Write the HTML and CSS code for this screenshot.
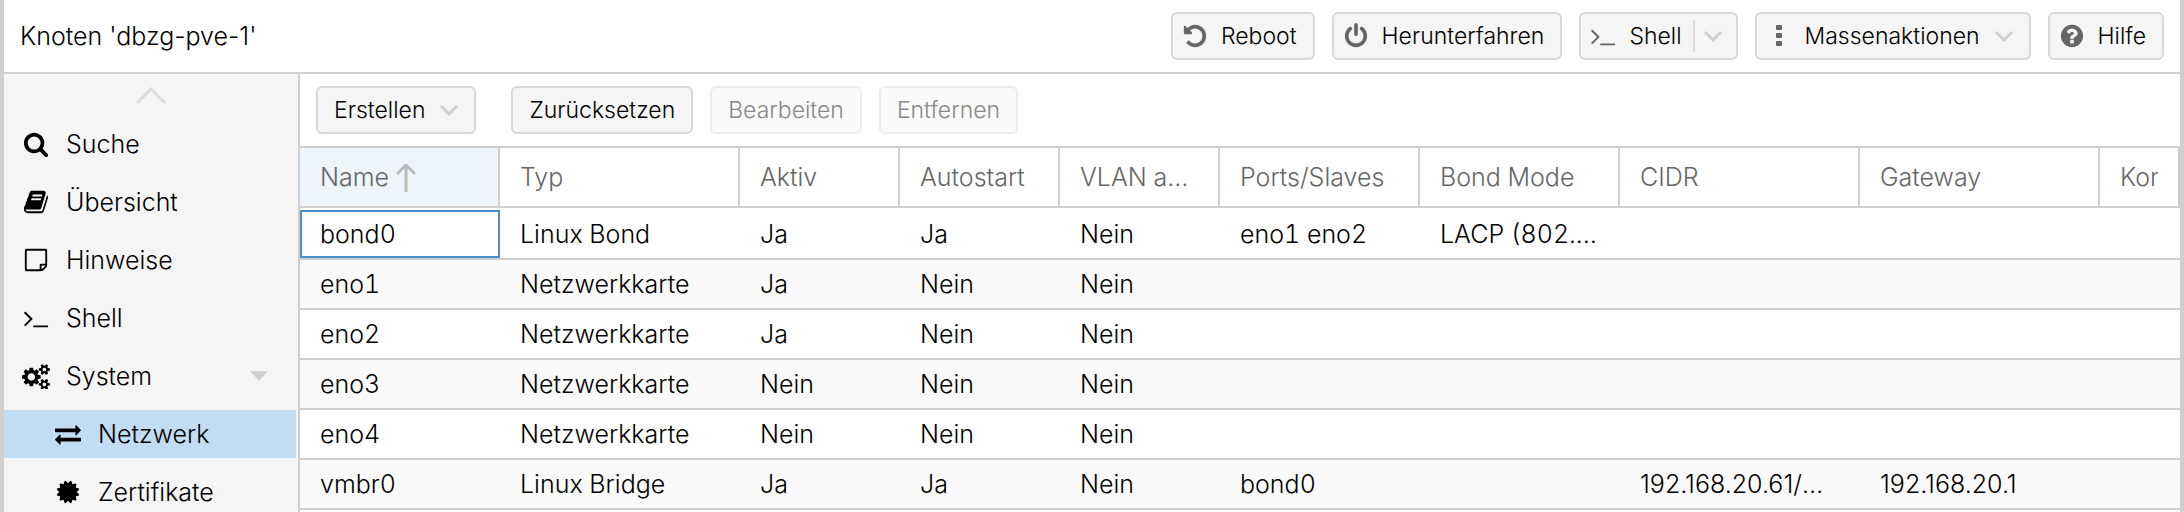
FILE: index.html
```html
<!DOCTYPE html>
<html lang="de">
<head>
  <meta charset="utf-8">
  <title>dbzg-pve-1 - Netzwerk</title>
  <link rel="stylesheet" href="styles.css">
</head>
<body>

<div class="panel">
  <header class="panel-header">
    <h1>Knoten 'dbzg-pve-1'</h1>
    <div class="actions">
      <button type="button" class="btn">
        <svg class="icon" viewBox="0 0 1792 1792"><path d="M1664 896q0 156-61 298t-164 245-245 164-298 61q-172 0-327-72.5t-264-204.5q-7-10-6.5-22.5t8.5-20.5l137-138q10-9 25-9 16 2 23 12 73 95 179 147t225 52q104 0 198.5-40.5t163.5-109.5 109.5-163.5 40.5-198.5-40.5-198.5-109.5-163.5-163.5-109.5-198.5-40.5q-98 0-188 35.5t-160 101.5l137 138q31 30 14 69-17 40-59 40h-448q-26 0-45-19t-19-45v-448q0-42 40-59 39-17 69 14l130 129q107-101 244.5-156.5t284.5-55.5q156 0 298 61t245 164 164 245 61 298z"/></svg>
        Reboot
      </button>
      <button type="button" class="btn">
        <svg class="icon" viewBox="0 0 1792 1792"><path d="M1664 896q0 156-61 298t-164 245-245 164-298 61-298-61-245-164-164-245-61-298q0-182 80.5-343t226.5-270q43-32 95.5-25t83.5 50q32 42 24.5 94.5t-49.5 84.5q-98 74-151.5 181t-53.5 228q0 104 40.5 198.5t109.5 163.5 163.5 109.5 198.5 40.5 198.5-40.5 163.5-109.5 109.5-163.5 40.5-198.5q0-121-53.5-228t-151.5-181q-42-32-49.5-84.5t24.5-94.5q31-43 84-50t95 25q146 109 226.5 270t80.5 343zm-640-768v640q0 52-38 90t-90 38-90-38-38-90v-640q0-52 38-90t90-38 90 38 38 90z"/></svg>
        Herunterfahren
      </button>
      <button type="button" class="btn btn-split">
        <svg class="icon" viewBox="0 0 1792 1792"><path d="M649 983l-466 466q-10 10-23 10t-23-10l-50-50q-10-10-10-23t10-23l393-393-393-393q-10-10-10-23t10-23l50-50q10-10 23-10t23 10l466 466q10 10 10 23t-10 23zm1079 457v64q0 14-9 23t-23 9h-960q-14 0-23-9t-9-23v-64q0-14 9-23t23-9h960q14 0 23 9t9 23z"/></svg>
        Shell
        <span class="divider"></span>
        <svg class="chevron" viewBox="0 0 18 12"><path d="M1 2l8 8 8-8"/></svg>
      </button>
      <button type="button" class="btn">
        <svg class="icon" viewBox="0 0 26 26"><path d="M11 2h4q1 0 1 1v3q0 1-1 1h-4q-1 0-1-1v-3q0-1 1-1zM11 10h4q1 0 1 1v3q0 1-1 1h-4q-1 0-1-1v-3q0-1 1-1zM11 18h4q1 0 1 1v3q0 1-1 1h-4q-1 0-1-1v-3q0-1 1-1z"/></svg>
        Massenaktionen
        <svg class="chevron" viewBox="0 0 18 12"><path d="M1 2l8 8 8-8"/></svg>
      </button>
      <button type="button" class="btn">
        <svg class="icon" viewBox="0 0 1792 1792"><path d="M1024 1376v-192q0-14-9-23t-23-9h-192q-14 0-23 9t-9 23v192q0 14 9 23t23 9h192q14 0 23-9t9-23zm256-672q0-88-55.5-163t-138.5-116-170-41q-243 0-371 213-15 24 8 42l132 100q7 6 19 6 16 0 25-12 53-68 86-92 34-24 86-24 48 0 85.5 26t37.5 59q0 38-20 61t-68 45q-63 28-115.5 86.5t-52.5 125.5v36q0 14 9 23t23 9h192q14 0 23-9t9-23q0-19 21.5-49.5t54.5-49.5q32-18 49-28.5t46-35 44.5-48 28-60.5 12.5-81zm384 192q0 209-103 385.5t-279.5 279.5-385.5 103-385.5-103-279.5-279.5-103-385.5 103-385.5 279.5-279.5 385.5-103 385.5 103 279.5 279.5 103 385.5z"/></svg>
        Hilfe
      </button>
    </div>
  </header>

  <div class="panel-body">
    <nav class="sidebar">
      <button type="button" class="scroller" aria-label="Nach oben">
        <svg viewBox="0 0 30 18"><path d="M1 16L15 2l14 14"/></svg>
      </button>
      <a href="#suche">
        <svg class="icon" viewBox="0 0 1792 1792"><path d="M1216 832q0-185-131.5-316.5t-316.5-131.5-316.5 131.5-131.5 316.5 131.5 316.5 316.5 131.5 316.5-131.5 131.5-316.5zm512 832q0 52-38 90t-90 38q-54 0-90-38l-343-342q-179 124-399 124-143 0-273.5-55.5t-225-150-150-225-55.5-273.5 55.5-273.5 150-225 225-150 273.5-55.5 273.5 55.5 225 150 150 225 55.5 273.5q0 220-124 399l343 343q37 37 37 90z"/></svg>
        Suche
      </a>
      <a href="#uebersicht">
        <svg class="icon" viewBox="0 0 1792 1792"><path d="M1703 478q40 57 18 129l-275 906q-19 64-76.5 107.5t-122.5 43.5h-923q-77 0-148.5-53.5t-99.5-131.5q-24-67-2-127 0-4 3-27t4-37q1-8-3-21.5t-3-19.5q2-11 8-21t16.5-23.5 16.5-23.5q23-38 45-91.5t30-91.5q3-10 .5-30t-.5-28q3-11 17-28t17-23q21-36 42-92t25-90q1-9-2.5-32t.5-28q4-13 22-30.5t22-22.5q19-26 42.5-84.5t27.5-96.5q1-8-3-25.5t-2-26.5q2-8 9-18t18-23 17-21q8-12 16.5-30.5t15-35 16-36 19.5-32 26.5-23.5 36-11.5 47.5 5.5l-1 3q38-9 51-9h761q74 0 114 56t18 130l-274 906q-36 119-71.5 153.5t-128.5 34.5h-869q-27 0-38 15-11 16-1 43 24 70 144 70h923q29 0 56-15.5t35-41.5l300-987q7-22 5-57 38 15 59 43zm-1064 2q-4 13 2 22.5t20 9.5h608q13 0 25.5-9.5t16.5-22.5l21-64q4-13-2-22.5t-20-9.5h-608q-13 0-25.5 9.5t-16.5 22.5zm-83 256q-4 13 2 22.5t20 9.5h608q13 0 25.5-9.5t16.5-22.5l21-64q4-13-2-22.5t-20-9.5h-608q-13 0-25.5 9.5t-16.5 22.5z"/></svg>
        Übersicht
      </a>
      <a href="#hinweise">
        <svg class="icon" viewBox="0 0 1792 1792"><path d="M1528 1280h-248v248q29-10 41-22l185-185q12-12 22-41zm-280-128h288v-896h-1280v1280h896v-288q0-40 28-68t68-28zm416-928v1024q0 40-20 88t-48 76l-184 184q-28 28-76 48t-88 20h-1024q-40 0-68-28t-28-68v-1344q0-40 28-68t68-28h1344q40 0 68 28t28 68z"/></svg>
        Hinweise
      </a>
      <a href="#shell">
        <svg class="icon" viewBox="0 0 1792 1792"><path d="M649 983l-466 466q-10 10-23 10t-23-10l-50-50q-10-10-10-23t10-23l393-393-393-393q-10-10-10-23t10-23l50-50q10-10 23-10t23 10l466 466q10 10 10 23t-10 23zm1079 457v64q0 14-9 23t-23 9h-960q-14 0-23-9t-9-23v-64q0-14 9-23t23-9h960q14 0 23 9t9 23z"/></svg>
        Shell
      </a>
      <a href="#system">
        <svg class="icon icon-wide" viewBox="0 0 1920 1792"><path d="M896 960q0-106-75-181t-181-75-181 75-75 181 75 181 181 75 181-75 75-181zm768 512q0-52-38-90t-90-38-90 38-38 90q0 53 37.5 90.5t90.5 37.5 90.5-37.5 37.5-90.5zm0-1024q0-52-38-90t-90-38-90 38-38 90q0 53 37.5 90.5t90.5 37.5 90.5-37.5 37.5-90.5zm-384 421v185q0 10-7 19.5t-16 10.5l-155 24q-11 35-32 76 34 48 90 115 7 11 7 20 0 12-7 19-23 30-82.5 89.5t-78.5 59.5q-11 0-21-7l-115-90q-37 19-77 31-11 108-23 155-7 24-30 24h-186q-11 0-20-7.5t-10-17.5l-23-153q-34-10-75-31l-118 89q-7 7-20 7-11 0-21-8-144-133-144-160 0-9 7-19 10-14 41-53t47-61q-23-44-35-82l-152-24q-10-1-17-9.5t-7-19.5v-185q0-10 7-19.5t16-10.5l155-24q11-35 32-76-34-48-90-115-7-11-7-20 0-12 7-20 22-30 82-89t79-59q11 0 21 7l115 90q34-18 77-32 11-108 23-154 7-24 30-24h186q11 0 20 7.5t10 17.5l23 153q34 10 75 31l118-89q8-7 20-7 11 0 21 8 144 133 144 160 0 8-7 19-12 16-42 54t-45 60q23 48 34 82l152 23q10 2 17 10.5t7 19.5zm640 533v140q0 16-149 31-12 27-30 52 51 113 51 138 0 4-4 7-122 71-124 71-8 0-46-47t-52-68q-20 2-30 2t-30-2q-14 21-52 68t-46 47q-2 0-124-71-4-3-4-7 0-25 51-138-18-25-30-52-149-15-149-31v-140q0-16 149-31 13-29 30-52-51-113-51-138 0-4 4-7 4-2 35-20t59-34 30-16q8 0 46 46.5t52 67.5q20-2 30-2t30 2q51-71 92-112l6-2q4 0 124 70 4 3 4 7 0 25-51 138 17 23 30 52 149 15 149 31zm0-1024v140q0 16-149 31-12 27-30 52 51 113 51 138 0 4-4 7-122 71-124 71-8 0-46-47t-52-68q-20 2-30 2t-30-2q-14 21-52 68t-46 47q-2 0-124-71-4-3-4-7 0-25 51-138-18-25-30-52-149-15-149-31v-140q0-16 149-31 13-29 30-52-51-113-51-138 0-4 4-7 4-2 35-20t59-34 30-16q8 0 46 46.5t52 67.5q20-2 30-2t30 2q51-71 92-112l6-2q4 0 124 70 4 3 4 7 0 25-51 138 17 23 30 52 149 15 149 31z"/></svg>
        System
        <span class="expander"></span>
      </a>
      <a href="#netzwerk" class="sub active">
        <svg class="icon" viewBox="0 0 1792 1792"><path d="M1792 1184v192q0 13-9.5 22.5t-22.5 9.5h-1376v192q0 13-9.5 22.5t-22.5 9.5q-12 0-24-10l-319-320q-9-9-9-22 0-14 9-23l320-320q9-9 23-9 13 0 22.5 9.5t9.5 22.5v192h1376q13 0 22.5 9.5t9.5 22.5zm0-544q0 14-9 23l-320 320q-9 9-23 9-13 0-22.5-9.5t-9.5-22.5v-192h-1376q-13 0-22.5-9.5t-9.5-22.5v-192q0-13 9.5-22.5t22.5-9.5h1376v-192q0-14 9-23t23-9q12 0 24 10l319 319q9 9 9 23z"/></svg>
        Netzwerk
      </a>
      <a href="#zertifikate" class="sub">
        <svg class="icon" viewBox="0 0 1792 1792"><path d="M1504 896l138 135q30 28 20 70-12 41-52 51l-188 48 53 186q12 41-19 70-29 31-70 19l-186-53-48 188q-10 40-51 52-12 2-19 2-31 0-51-22l-135-138-135 138q-28 30-70 20-41-11-51-52l-48-188-186 53q-41 12-70-19-31-29-19-70l53-186-188-48q-40-10-52-51-10-42 20-70l138-135-138-135q-30-28-20-70 12-41 52-51l188-48-53-186q-12-41 19-70 29-31 70-19l186 53 48-188q10-41 51-51 41-12 70 19l135 139 135-139q29-30 70-19 41 10 51 51l48 188 186-53q41-12 70 19 31 29 19 70l-53 186 188 48q40 10 52 51 10 42-20 70z"/></svg>
        Zertifikate
      </a>
    </nav>

    <main class="content">
      <div class="toolbar">
        <button type="button" class="btn btn-create">
          Erstellen
          <svg class="chevron" viewBox="0 0 18 12"><path d="M1 2l8 8 8-8"/></svg>
        </button>
        <button type="button" class="btn">Zurücksetzen</button>
        <button type="button" class="btn" disabled>Bearbeiten</button>
        <button type="button" class="btn" disabled>Entfernen</button>
      </div>

      <table class="grid">
        <colgroup>
          <col class="w-200">
          <col class="w-240">
          <col class="w-160">
          <col class="w-160">
          <col class="w-160">
          <col class="w-200">
          <col class="w-200">
          <col class="w-240">
          <col class="w-240">
          <col>
        </colgroup>
        <thead>
          <tr>
            <th class="sorted">Name<svg class="sort" viewBox="0 0 20 28"><path d="M10 28V2M1 10l9-9 9 9"/></svg></th>
            <th>Typ</th>
            <th>Aktiv</th>
            <th>Autostart</th>
            <th>VLAN aware</th>
            <th>Ports/Slaves</th>
            <th>Bond Mode</th>
            <th>CIDR</th>
            <th>Gateway</th>
            <th><div class="clip">Kommentar</div></th>
          </tr>
        </thead>
        <tbody>
          <tr>
            <td class="focused">bond0</td>
            <td>Linux Bond</td>
            <td>Ja</td>
            <td>Ja</td>
            <td>Nein</td>
            <td>eno1 eno2</td>
            <td>LACP (802.3ad)</td>
            <td></td>
            <td></td>
            <td></td>
          </tr>
          <tr>
            <td>eno1</td>
            <td>Netzwerkkarte</td>
            <td>Ja</td>
            <td>Nein</td>
            <td>Nein</td>
            <td></td>
            <td></td>
            <td></td>
            <td></td>
            <td></td>
          </tr>
          <tr>
            <td>eno2</td>
            <td>Netzwerkkarte</td>
            <td>Ja</td>
            <td>Nein</td>
            <td>Nein</td>
            <td></td>
            <td></td>
            <td></td>
            <td></td>
            <td></td>
          </tr>
          <tr>
            <td>eno3</td>
            <td>Netzwerkkarte</td>
            <td>Nein</td>
            <td>Nein</td>
            <td>Nein</td>
            <td></td>
            <td></td>
            <td></td>
            <td></td>
            <td></td>
          </tr>
          <tr>
            <td>eno4</td>
            <td>Netzwerkkarte</td>
            <td>Nein</td>
            <td>Nein</td>
            <td>Nein</td>
            <td></td>
            <td></td>
            <td></td>
            <td></td>
            <td></td>
          </tr>
          <tr>
            <td>vmbr0</td>
            <td>Linux Bridge</td>
            <td>Ja</td>
            <td>Ja</td>
            <td>Nein</td>
            <td>bond0</td>
            <td></td>
            <td class="address">192.168.20.61/24</td>
            <td class="address">192.168.20.1</td>
            <td></td>
          </tr>
        </tbody>
      </table>
    </main>
  </div>
</div>

</body>
</html>
```
FILE: styles.css
```css
* {
  box-sizing: border-box;
}

body {
  margin: 0;
  font-family: Inter, "Liberation Sans", sans-serif;
  font-size: 25px;
  font-weight: 300;
  color: #000;
  background-color: #fff;
}

.panel {
  display: flex;
  flex-direction: column;
  min-height: 100vh;
  border-left: 4px solid #cfcfcf;
  border-right: 4px solid #cfcfcf;
}

.panel-header {
  display: flex;
  align-items: center;
  justify-content: space-between;
  padding: 12px 16px;
  border-bottom: 2px solid #cfcfcf;
}

.panel-header h1 {
  margin: 0;
  font-size: 25px;
  font-weight: 300;
}

.actions {
  display: flex;
  gap: 17px;
}

/* buttons */
.btn {
  display: flex;
  align-items: center;
  height: 48px;
  padding: 0 16px;
  border: 2px solid #d8d8d8;
  border-radius: 6px;
  background-color: #f5f5f5;
  color: #000;
  font: inherit;
  font-size: 23px;
  white-space: nowrap;
}

.btn:disabled {
  border-color: #ececec;
  background-color: #fafafa;
  color: #888;
}

.icon {
  flex: none;
  width: 26px;
  height: 26px;
  fill: currentColor;
}

.btn .icon {
  margin-left: -7px;
  margin-right: 13px;
  fill: #666;
}

.chevron {
  width: 18px;
  height: 12px;
  margin-left: 15px;
  fill: none;
  stroke: #cfcfcf;
  stroke-width: 3;
}

.divider {
  width: 2px;
  height: 32px;
  margin-left: 11px;
  background-color: #dcdcdc;
}

.btn-split {
  padding-right: 14px;
}

.btn-split .chevron {
  margin-left: 9px;
}

.panel-body {
  display: flex;
  flex: 1;
}

/* navigation */
.sidebar {
  flex: none;
  width: 296px;
  border-right: 2px solid #cfcfcf;
  background-color: #f5f5f5;
}

.scroller {
  display: block;
  width: 100%;
  height: 46px;
  padding: 0;
  border: 0;
  background: none;
}

.scroller svg {
  width: 30px;
  height: 18px;
  fill: none;
  stroke: #dcdcdc;
  stroke-width: 3;
}

.sidebar a {
  display: flex;
  align-items: center;
  gap: 17px;
  height: 48px;
  margin: 0 2px 10px 0;
  padding-left: 19px;
  color: #000;
  text-decoration: none;
}

.sidebar a.sub {
  padding-left: 51px;
}

.sidebar a.active {
  background-color: #c2ddf2;
}

.sidebar .icon-wide {
  width: 28px;
  margin: 0 -1px;
}

.expander {
  margin-left: auto;
  margin-right: 28px;
  border: 9px solid transparent;
  border-top: 10px solid #cfcfcf;
  border-bottom: 0;
}

.content {
  flex: 1;
  min-width: 0;
}

.toolbar {
  display: flex;
  gap: 17px;
  padding: 12px 16px;
  border-bottom: 2px solid #cfcfcf;
}

.btn-create {
  margin-right: 18px;
}

/* network devices */
.grid {
  width: 100%;
  table-layout: fixed;
  border-spacing: 0;
  font-variant-numeric: tabular-nums;
}

.w-160 {
  width: 160px;
}

.w-200 {
  width: 200px;
}

.w-240 {
  width: 240px;
}

.grid th,
.grid td {
  height: 50px;
  padding: 0 20px;
  border-bottom: 2px solid #cfcfcf;
  overflow: hidden;
  text-align: left;
  font-weight: 300;
  text-overflow: ellipsis;
  white-space: nowrap;
}

.grid th {
  height: 60px;
  border-right: 2px solid #cfcfcf;
  color: #666;
}

.grid th.sorted {
  background-color: #edf4fb;
}

.grid td.address {
  padding-right: 32px;
  font-variant-numeric: normal;
}

.clip {
  overflow: hidden;
}

.sort {
  width: 20px;
  height: 28px;
  margin-left: 7px;
  vertical-align: -6px;
  fill: none;
  stroke: #bbb;
  stroke-width: 3;
}

.grid tbody tr:first-child td {
  height: 52px;
  border-top: 2px solid #fff;
}

.grid tbody tr:nth-child(even) td {
  background-color: #fafafa;
}

.grid td.focused {
  box-shadow: inset 0 0 0 2px #4a90c8;
}
```
